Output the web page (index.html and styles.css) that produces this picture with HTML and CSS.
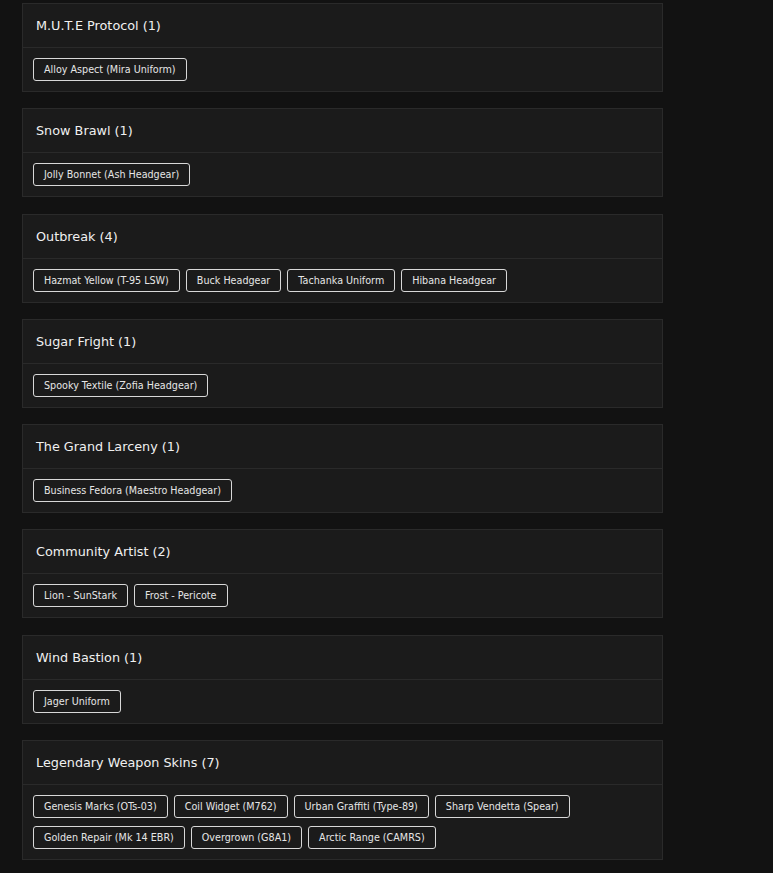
FILE: index.html
```html
<!DOCTYPE html>
<html lang="en">
<head>
	<meta charset="UTF-8">
	<title>Event Collections</title>
	<link rel="stylesheet" href="styles.css">
</head>
<body>
	<div id="wrapper">
		<div class="card">
			<div class="card-header">M.U.T.E Protocol (1)</div>
			<div class="card-body">
				<span class="item">Alloy Aspect (Mira Uniform)</span>
			</div>
		</div>
		<div class="card">
			<div class="card-header">Snow Brawl (1)</div>
			<div class="card-body">
				<span class="item">Jolly Bonnet (Ash Headgear)</span>
			</div>
		</div>
		<div class="card">
			<div class="card-header">Outbreak (4)</div>
			<div class="card-body">
				<span class="item">Hazmat Yellow (T-95 LSW)</span>
				<span class="item">Buck Headgear</span>
				<span class="item">Tachanka Uniform</span>
				<span class="item">Hibana Headgear</span>
			</div>
		</div>
		<div class="card">
			<div class="card-header">Sugar Fright (1)</div>
			<div class="card-body">
				<span class="item">Spooky Textile (Zofia Headgear)</span>
			</div>
		</div>
		<div class="card">
			<div class="card-header">The Grand Larceny (1)</div>
			<div class="card-body">
				<span class="item">Business Fedora (Maestro Headgear)</span>
			</div>
		</div>
		<div class="card">
			<div class="card-header">Community Artist (2)</div>
			<div class="card-body">
				<span class="item">Lion - SunStark</span>
				<span class="item">Frost - Pericote</span>
			</div>
		</div>
		<div class="card">
			<div class="card-header">Wind Bastion (1)</div>
			<div class="card-body">
				<span class="item">Jager Uniform</span>
			</div>
		</div>
		<div class="card">
			<div class="card-header">Legendary Weapon Skins (7)</div>
			<div class="card-body">
				<span class="item">Genesis Marks (OTs-03)</span>
				<span class="item">Coil Widget (M762)</span>
				<span class="item">Urban Graffiti (Type-89)</span>
				<span class="item">Sharp Vendetta (Spear)</span>
				<span class="item">Golden Repair (Mk 14 EBR)</span>
				<span class="item">Overgrown (G8A1)</span>
				<span class="item">Arctic Range (CAMRS)</span>
			</div>
		</div>
	</div>
</body>
</html>
```

FILE: styles.css
```css
body {
	margin: 0;
	background-color: #121212;
	color: #e6e6e6;
	font-family: "DejaVu Sans", sans-serif;
}
#wrapper {
	width: 641px;
	margin-left: 22px;
	padding-top: 3px;
	display: flex;
	flex-direction: column;
	gap: 16.3px;
}
.card {
	background-color: #1b1b1b;
	border: 1px solid #2a2a2a;
}
.card-header {
	height: 43px;
	display: flex;
	align-items: center;
	padding: 0 13px;
	font-size: 12.8px;
	color: #f0f0f0;
	border-bottom: 1px solid #2a2a2a;
}
.card-body {
	display: flex;
	flex-wrap: wrap;
	gap: 8px 6px;
	padding: 10px;
}
.item {
	display: inline-block;
	height: 21px;
	line-height: 21px;
	padding: 0 10px;
	font-size: 9.6px;
	border: 1px solid #d8d8d8;
	border-radius: 3px;
	background-color: #1b1b1b;
	white-space: nowrap;
}
```
